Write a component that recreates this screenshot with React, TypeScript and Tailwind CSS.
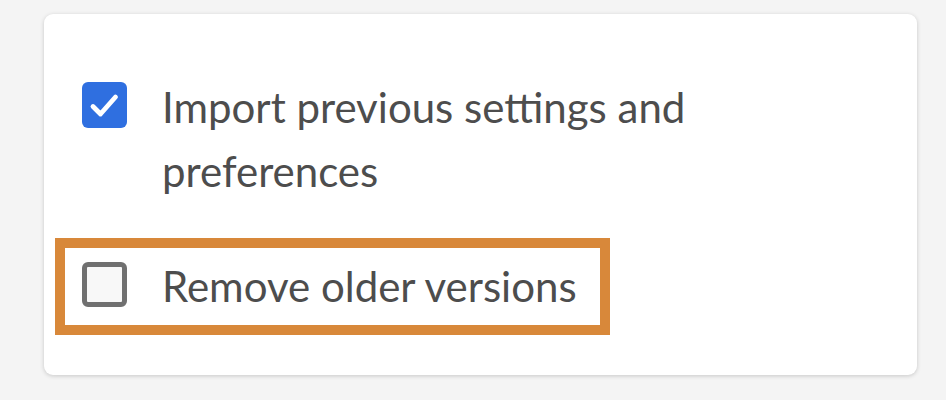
import React from "react";

function CheckIcon() {
  return (
    <svg viewBox="0 0 45 46" className="h-[46px] w-[45px]">
      <path d="M11 24.5 L18.5 32 L33.5 15" fill="none" stroke="#ffffff" strokeWidth="4.8" strokeLinecap="round" strokeLinejoin="round" />
    </svg>
  );
}

export default function App() {
  return (
    <div className="h-[400px] w-[946px] overflow-hidden bg-[#f4f4f4] pt-[14px] pl-[44px]" style={{ fontFamily: 'Lato, "Open Sans", sans-serif' }}>
      <div className="flex h-[361px] w-[873px] flex-col rounded-[9px] bg-white pt-[61px] pl-[38px] shadow-[0_1px_4px_rgba(0,0,0,0.18)]">
        <div className="flex items-start">
          <div className="mt-[7px] h-[46px] w-[45px] shrink-0 rounded-[6px] bg-[#2f6fe0]">
            <CheckIcon />
          </div>
          <div className="ml-[35px] w-[560px] text-[42px] leading-[64px] text-[#4d4d4d]">
            Import previous settings and preferences
          </div>
        </div>
        <div className="ml-[-27px] mt-[35px] flex h-[97px] w-[555px] items-start border-[10px] border-[#d8883a] pl-[17px]">
          <div className="mt-[14px] h-[45px] w-[45px] shrink-0 rounded-[6px] border-[5px] border-[#707070] bg-[#f8f8f8]" />
          <div className="ml-[35px] mt-[6px] whitespace-nowrap text-[42px] leading-[64px] text-[#4d4d4d]">Remove older versions</div>
        </div>
      </div>
    </div>
  );
}
